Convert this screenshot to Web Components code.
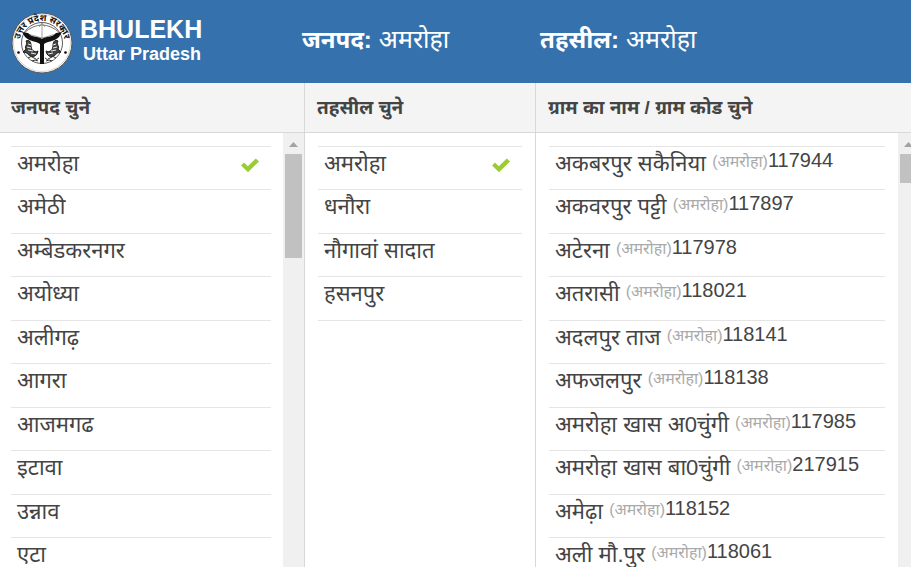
<!DOCTYPE html>
<html lang="hi">
<head>
<meta charset="utf-8">
<meta name="viewport" content="width=device-width, initial-scale=1">
<title>BHULEKH Uttar Pradesh</title>
<style>
html, body {
  height: 100%;
  margin: 0;
  overflow: hidden;
}

body {
  --bar: #3572ad;
  --line: #d8d8d8;
  --rule: #e5e5e5;
  --tick: #9acd32;
  color: #444;
  background: #fff;
  font-family: "Liberation Sans", "Noto Sans Devanagari", "Noto Sans", sans-serif;
}
</style>
</head>
<body>
<bhulekh-app></bhulekh-app>

<script>
const define = (name, html, setup) => {
  const template = document.createElement('template')
  template.innerHTML = html
  customElements.define(name, class extends HTMLElement {
    constructor() {
      super()
      this.attachShadow({ mode: 'open' })
      this.shadowRoot.appendChild(template.content.cloneNode(true))
    }

    connectedCallback() {
      if (setup) setup(this, this.shadowRoot)
    }
  })
}

define('state-emblem', `
<style>
:host {
  display: block;
  flex: none;
  width: 62px;
  height: 62px;
}

svg {
  display: block;
}

text {
  font: bold 9px "Noto Sans Devanagari", "Noto Sans", sans-serif;
  fill: #111;
}
</style>
<svg width="62" height="62" viewBox="0 0 62 62" role="img" aria-label="उत्तर प्रदेश सरकार">
  <circle cx="31" cy="31" r="30" fill="#fff" stroke="#555" stroke-width="1"/>
  <circle cx="31" cy="31" r="28.500" fill="none" stroke="#bbb" stroke-width=".6"/>
  <circle cx="31" cy="31" r="20.500" fill="#fff" stroke="#333" stroke-width=".8"/>
  <path id="arc" d="M9 36 A22.500 22.500 0 1 1 53 36" fill="none"/>
  <text text-anchor="middle"><textPath href="#arc" startOffset="50%">उत्तर प्रदेश सरकार</textPath></text>
  <circle cx="7.500" cy="40.500" r="1.300"/><circle cx="54.500" cy="40.500" r="1.300"/>
  <path d="M13 21 Q31 5 49 21" fill="none" stroke="#666" stroke-width=".9"/>
  <path d="M13 21 L31 26 L49 21 M31 12 V27 M28 15 L31 11 L34 15" fill="none" stroke="#888" stroke-width=".8"/>
  <path d="M11 20 L17 21 C21 26 27 24 31 27 C35 24 41 26 45 21 L51 20 L48 25 C43 30 37 29 33 32 V52 H29 V32 C25 29 19 30 14 25 Z" fill="#111"/>
  <path d="M15 29 C18 27 20 30 20 33 C20 38 23 41 27 39 C26 46 19 46 16 41 L12 40 L15 37 C13 34 17 33 15 29 Z M47 29 C44 27 42 30 42 33 C42 38 39 41 35 39 C36 46 43 46 46 41 L50 40 L47 37 C49 34 45 33 47 29 Z" fill="#444" stroke="#111" stroke-width=".9"/>
  <path d="M17 32 l3 1 M16 35 l4 1 M17 38 l5 1 M20 41 l5 1 M45 32 l-3 1 M46 35 l-4 1 M45 38 l-5 1 M42 41 l-5 1" stroke="#eee" stroke-width="1"/>
  <path d="M17 46 q3 -3 6 0 t5 0 M45 46 q-3 -3 -6 0 t-5 0 M21 49 q3 -2 6 0 M41 49 q-3 -2 -6 0" fill="none" stroke="#333" stroke-width="1"/>
</svg>
`)

define('site-header', `
<style>
:host {
  display: block;
  color: #fff;
  background: var(--bar);
}

header {
  display: grid;
  grid-template-columns: 291fr 238fr 359fr;
  align-items: start;
  padding: 12px 12px 9px 11px;
}

.brand {
  display: flex;
  gap: 7px;
}

h1 {
  margin: 0;
  padding-top: 4px;
  font-size: 25px;
  line-height: 26px;
  white-space: nowrap;
}

small {
  display: block;
  padding-left: 3px;
  font-size: 18px;
  line-height: 24px;
}

p {
  margin: 0;
  padding-top: 8px;
  font-size: 25px;
  line-height: 38px;
  white-space: nowrap;
}

b {
  font-size: 24px;
}
</style>
<header>
  <div class="brand">
    <state-emblem></state-emblem>
    <h1>BHULEKH<small>Uttar Pradesh</small></h1>
  </div>
  <p><b>जनपद:</b> <slot name="district"></slot></p>
  <p><b>तहसील:</b> <slot name="tehsil"></slot></p>
</header>
`)

define('scroll-rail', `
<style>
:host {
  display: flex;
  flex-direction: column;
  align-items: center;
  flex: none;
  width: 21px;
  background: #f0f0f0;
}

svg {
  flex: none;
}

i {
  width: 17px;
  height: var(--thumb, 104px);
  background: #c1c1c1;
}
</style>
<svg width="17" height="21"><path d="M4 14 L8.500 9 L13 14 Z" fill="#a3a3a3"/></svg>
<i></i>
`)

define('pick-item', `
<style>
:host {
  display: block;
  border-bottom: 1px solid var(--rule);
}

button {
  display: flex;
  align-items: flex-start;
  justify-content: space-between;
  width: 100%;
  height: 100%;
  padding: 0 12px 0 6px;
  border: 0;
  color: inherit;
  background: none;
  font: inherit;
  font-size: 22px;
  line-height: 34px;
  text-align: left;
  white-space: nowrap;
  cursor: pointer;
}

svg {
  display: none;
  margin-top: 11px;
}

:host([selected]) svg {
  display: block;
}

.extra {
  vertical-align: 4px;
  font-size: 20px;
  line-height: 20px;
}

.extra small {
  color: #aaa;
  font-size: 16px;
}
</style>
<button type="button">
  <span><slot></slot></span>
  <svg width="18" height="15" viewBox="0 0 18 15" aria-hidden="true"><path d="M0 7.500 L3 4.500 L6.800 8.200 L14.800 .5 L18 3.400 L7 14.200 Z" fill="var(--tick)"/></svg>
</button>
`, (host, root) => {
  const code = host.getAttribute('code')
  if (!code) return
  const extra = document.createElement('span')
  extra.className = 'extra'
  const place = document.createElement('small')
  place.textContent = `(${host.getAttribute('place')})`
  extra.append(place, code)
  root.querySelector('button span').append(' ', extra)
})

define('pick-column', `
<style>
:host {
  display: flex;
  flex-direction: column;
  min-width: 0;
  min-height: 0;
  border-right: 1px solid var(--line);
}

h2 {
  margin: 0;
  padding: 1px 12px 0;
  border-bottom: 1px solid var(--line);
  background: #f4f4f4;
  font-size: 19px;
  line-height: 48px;
  white-space: nowrap;
}

.body {
  display: flex;
  flex: 1;
  min-height: 0;
}

.list {
  display: grid;
  flex: 1;
  grid-template-rows: 1px;
  grid-auto-rows: 43px 44px;
  align-content: start;
  min-width: 0;
  padding: 13px 13px 0;
  overflow-y: auto;
  scrollbar-width: none;
}

:host([first]) .list {
  padding: 13px 12px 0 11px;
}

:host([first]) h2 {
  padding-left: 11px;
}

.list::before {
  content: "";
  background: var(--rule);
}

scroll-rail {
  display: none;
}

:host([rail]) scroll-rail {
  display: flex;
}
</style>
<h2></h2>
<div class="body">
  <div class="list"><slot></slot></div>
  <scroll-rail></scroll-rail>
</div>
`, (host, root) => {
  root.querySelector('h2').textContent = host.getAttribute('heading')
})

const districts = ['अमरोहा', 'अमेठी', 'अम्बेडकरनगर', 'अयोध्या', 'अलीगढ़', 'आगरा', 'आजमगढ', 'इटावा', 'उन्नाव', 'एटा']
const tehsils = ['अमरोहा', 'धनौरा', 'नौगावां सादात', 'हसनपुर']
const villages = [
  ['अकबरपुर सकैनिया', 117944],
  ['अकवरपुर पट्टी', 117897],
  ['अटेरना', 117978],
  ['अतरासी', 118021],
  ['अदलपुर ताज', 118141],
  ['अफजलपुर', 118138],
  ['अमरोहा खास अ0चुंगी', 117985],
  ['अमरोहा खास बा0चुंगी', 217915],
  ['अमेढ़ा', 118152],
  ['अली मौ.पुर', 118061],
]

define('bhulekh-app', `
<style>
:host {
  display: flex;
  flex-direction: column;
  height: 100%;
}

main {
  display: grid;
  flex: 1;
  grid-template-columns: 305fr 231fr 383fr;
  grid-template-rows: minmax(0, 1fr);
  min-height: 0;
  /* the last scroll rail runs past the window edge */
  margin-right: -8px;
}

#villages {
  --thumb: 29px;
  border-right: 0;
}
</style>
<site-header>
  <span slot="district">अमरोहा</span>
  <span slot="tehsil">अमरोहा</span>
</site-header>
<main>
  <pick-column id="districts" heading="जनपद चुने" first rail></pick-column>
  <pick-column id="tehsils" heading="तहसील चुने"></pick-column>
  <pick-column id="villages" heading="ग्राम का नाम / ग्राम कोड चुने" rail></pick-column>
</main>
`, (host, root) => {
  const fill = (id, names) => {
    const column = root.getElementById(id)
    column.append(...names.map((name, i) => {
      const item = document.createElement('pick-item')
      item.textContent = name
      item.toggleAttribute('selected', i === 0)
      return item
    }))
    column.addEventListener('click', (event) => {
      const picked = event.target.closest('pick-item')
      if (!picked) return
      column.querySelectorAll('pick-item').forEach(item => item.toggleAttribute('selected', item === picked))
    })
  }
  fill('districts', districts)
  fill('tehsils', tehsils)

  root.getElementById('villages').append(...villages.map(([name, code]) => {
    const item = document.createElement('pick-item')
    item.textContent = name
    item.setAttribute('place', 'अमरोहा')
    item.setAttribute('code', code)
    return item
  }))
})
</script>
</body>
</html>
